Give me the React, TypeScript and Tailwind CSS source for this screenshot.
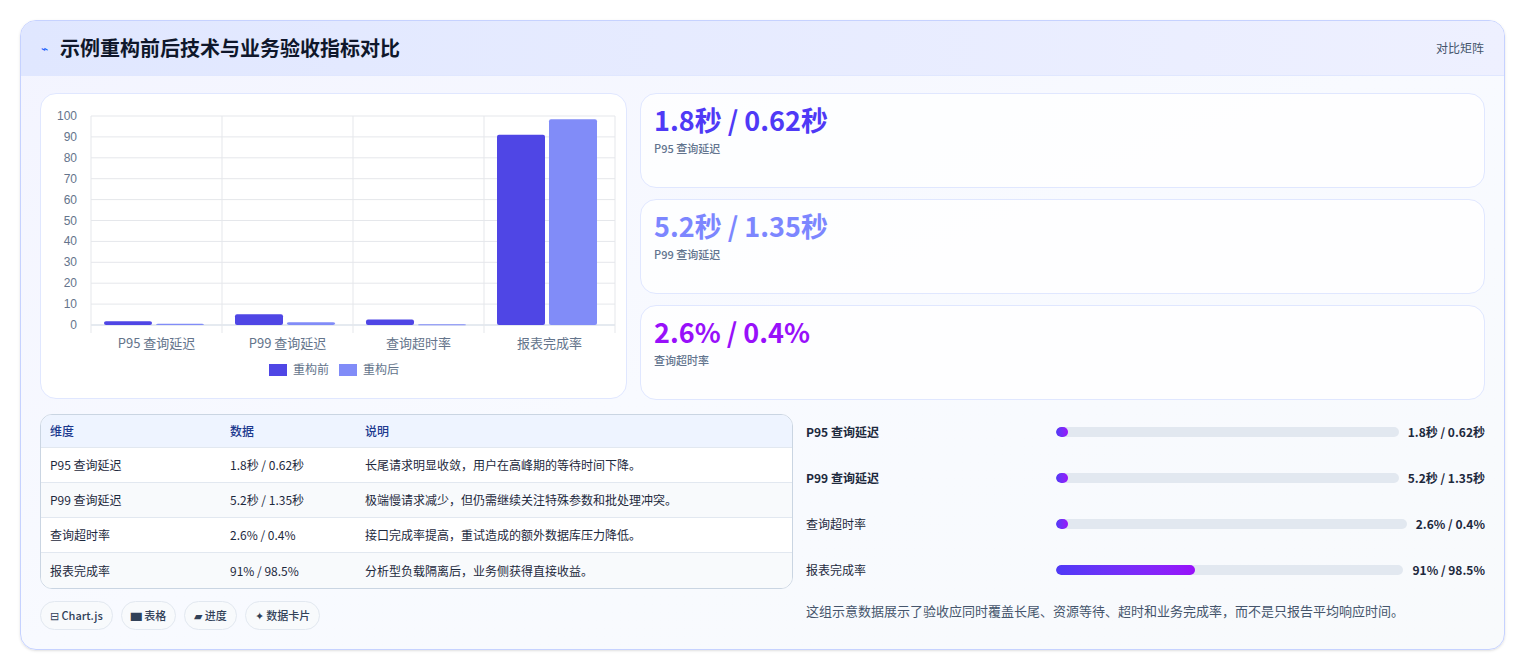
const font = { fontFamily: '"Noto Sans CJK SC", "Noto Sans", sans-serif' };

const metrics = [
  { name: "P95 查询延迟", before: 1.8, after: 0.62, text: "1.8秒 / 0.62秒", desc: "长尾请求明显收敛，用户在高峰期的等待时间下降。" },
  { name: "P99 查询延迟", before: 5.2, after: 1.35, text: "5.2秒 / 1.35秒", desc: "极端慢请求减少，但仍需继续关注特殊参数和批处理冲突。" },
  { name: "查询超时率", before: 2.6, after: 0.4, text: "2.6% / 0.4%", desc: "接口完成率提高，重试造成的额外数据库压力降低。" },
  { name: "报表完成率", before: 91, after: 98.5, text: "91% / 98.5%", desc: "分析型负载隔离后，业务侧获得直接收益。" },
];

function BarChart() {
  const x0 = 50, x1 = 574, yTop = 22, yBot = 231;
  const colW = (x1 - x0) / 4;
  const y = (v: number) => yBot - ((yBot - yTop) * v) / 100;
  return (
    <svg width="586" height="305" className="block">
      {[0, 10, 20, 30, 40, 50, 60, 70, 80, 90, 100].map((t) => (
        <g key={t}>
          <line x1={x0} x2={x1} y1={y(t)} y2={y(t)} stroke={t === 0 ? "#cbd5e1" : "#e5e7eb"} />
          <text x={x0 - 14} y={y(t) + 4} textAnchor="end" fontSize="12" fill="#64748b" fontFamily="Liberation Sans, sans-serif">{t}</text>
        </g>
      ))}
      {[0, 1, 2, 3, 4].map((i) => (
        <line key={i} x1={x0 + colW * i} x2={x0 + colW * i} y1={yTop} y2={yBot + 8} stroke="#e5e7eb" />
      ))}
      {metrics.map((m, i) => {
        const cx = x0 + colW * i;
        return (
          <g key={m.name}>
            <rect x={cx + 13} y={y(m.before)} width={48} height={Math.max(yBot - y(m.before), 2)} rx={2} fill="#4f46e5" />
            <rect x={cx + 65} y={y(m.after)} width={48} height={Math.max(yBot - y(m.after), 1)} rx={2} fill="#818cf8" />
            <text x={cx + colW / 2} y={254} textAnchor="middle" fontSize="13" fill="#64748b" fontFamily='"Noto Sans CJK SC", sans-serif'>{m.name}</text>
          </g>
        );
      })}
      <rect x={228} y={270} width={18} height={12} fill="#4f46e5" />
      <text x={252} y={280} fontSize="12" fill="#64748b" fontFamily='"Noto Sans CJK SC", sans-serif'>重构前</text>
      <rect x={298} y={270} width={18} height={12} fill="#818cf8" />
      <text x={322} y={280} fontSize="12" fill="#64748b" fontFamily='"Noto Sans CJK SC", sans-serif'>重构后</text>
    </svg>
  );
}

function StatCard({ value, label, color }: { value: string; label: string; color: string }) {
  return (
    <div className="h-[95px] rounded-2xl border border-indigo-100 bg-white/80 px-[13px] pt-[6px]">
      <div className={`text-[27px] font-bold leading-[40px] ${color}`}>{value}</div>
      <div className="text-[11px] text-slate-500 font-medium">{label}</div>
    </div>
  );
}

export default function App() {
  const fills = [3, 3, 2, 40];
  return (
    <div className="min-h-screen bg-white p-5" style={font}>
      <div className="rounded-2xl border border-indigo-200 bg-gradient-to-br from-[#f3f4ff] via-[#f8faff] to-[#f8fafc] overflow-hidden shadow-sm">
        <div className="h-[55px] flex items-center justify-between px-5 bg-gradient-to-r from-[#e0e7ff] to-[#eef0ff] border-b border-indigo-100">
          <div className="flex items-center gap-3">
            <span className="text-blue-600 text-xs">⌁</span>
            <span className="text-[20px] font-bold text-slate-900">示例重构前后技术与业务验收指标对比</span>
          </div>
          <span className="text-xs text-slate-600">对比矩阵</span>
        </div>
        <div className="px-[19px] pt-[17px] pb-[19px]">
          <div className="flex gap-[13px]">
            <div className="w-[587px] h-[306px] rounded-2xl border border-indigo-100 bg-white">
              <BarChart />
            </div>
            <div className="flex-1 flex flex-col gap-[11px]">
              <StatCard value="1.8秒 / 0.62秒" label="P95 查询延迟" color="text-indigo-600" />
              <StatCard value="5.2秒 / 1.35秒" label="P99 查询延迟" color="text-indigo-400" />
              <StatCard value="2.6% / 0.4%" label="查询超时率" color="text-purple-600" />
            </div>
          </div>
          <div className="flex gap-[13px] mt-[14px]">
            <div className="w-[753px]">
              <div className="rounded-xl border border-slate-300 overflow-hidden bg-white text-xs text-slate-800">
                <div className="flex h-[33px] items-center bg-[#eef4ff] border-b border-slate-200 text-blue-900 font-medium">
                  <div className="w-[189px] pl-[9px]">维度</div>
                  <div className="w-[135px]">数据</div>
                  <div>说明</div>
                </div>
                {metrics.map((m, i) => (
                  <div key={m.name} className={`flex h-[35px] items-center ${i < 3 ? "border-b border-slate-200" : ""} ${i % 2 ? "bg-slate-50" : ""}`}>
                    <div className="w-[189px] pl-[9px]">{m.name}</div>
                    <div className="w-[135px]">{m.text}</div>
                    <div>{m.desc}</div>
                  </div>
                ))}
              </div>
              <div className="flex gap-2 mt-[12px] text-[11px] font-medium text-slate-700">
                {["⊟ Chart.js", "▆ 表格", "▰ 进度", "✦ 数据卡片"].map((t) => (
                  <span key={t} className="h-[29px] px-[9px] flex items-center rounded-full border border-slate-200 bg-slate-50">{t}</span>
                ))}
              </div>
            </div>
            <div className="flex-1 mt-[-5px]">
              {metrics.map((m, i) => (
                <div key={m.name} className="flex items-center h-[46px] text-xs">
                  <div className={`w-[250px] text-slate-800 ${i < 2 ? "font-bold" : ""}`}>{m.name}</div>
                  <div className="flex-1 h-[10px] rounded-full bg-slate-200 overflow-hidden">
                    <div className="h-full rounded-full bg-gradient-to-r from-indigo-600 to-purple-600" style={{ width: `${fills[i]}%`, minWidth: 12 }} />
                  </div>
                  <div className="pl-[9px] font-bold text-slate-800 text-right">{m.text}</div>
                </div>
              ))}
              <p className="mt-[8px] text-[13px] text-slate-600">这组示意数据展示了验收应同时覆盖长尾、资源等待、超时和业务完成率，而不是只报告平均响应时间。</p>
            </div>
          </div>
        </div>
      </div>
    </div>
  );
}
